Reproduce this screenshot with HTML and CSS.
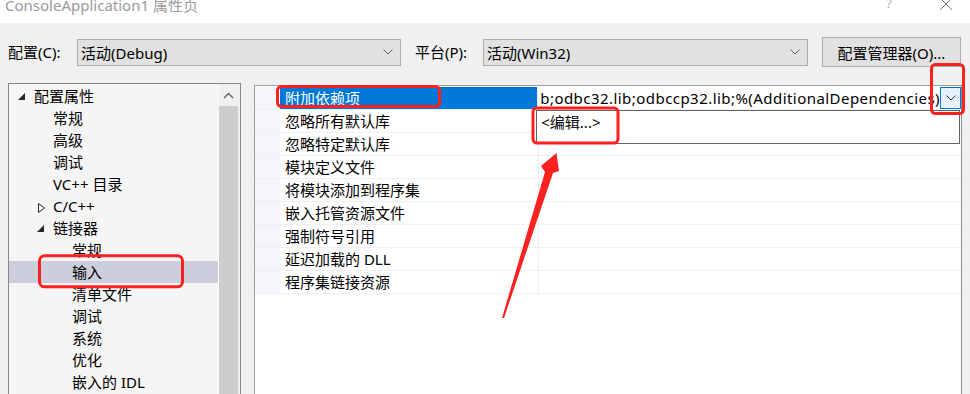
FILE: index.html
```html
<!DOCTYPE html>
<html lang="zh-CN">
<head>
<meta charset="utf-8">
<title>ConsoleApplication1 属性页</title>
<link rel="stylesheet" href="styles.css">
</head>
<body>
<div class="window">
  <div class="titlebar">
    <span class="title">ConsoleApplication1 属性页</span>
    <span class="help">?</span>
    <svg class="close" width="14" height="14" viewBox="0 0 14 14"><path d="M1 1 L13 13 M13 1 L1 13" stroke="#7a7a7a" stroke-width="1" fill="none"/></svg>
  </div>

  <div class="toolbar">
    <span class="lbl lbl-config">配置(C):</span>
    <div class="combo combo-config">
      <span class="combo-text">活动(Debug)</span>
      <svg class="chev" width="10" height="6" viewBox="0 0 10 6"><path d="M0.5 0.5 L5 5 L9.5 0.5" stroke="#606060" stroke-width="1" fill="none"/></svg>
    </div>
    <span class="lbl lbl-platform">平台(P):</span>
    <div class="combo combo-platform">
      <span class="combo-text">活动(Win32)</span>
      <svg class="chev" width="10" height="6" viewBox="0 0 10 6"><path d="M0.5 0.5 L5 5 L9.5 0.5" stroke="#606060" stroke-width="1" fill="none"/></svg>
    </div>
    <div class="btn">配置管理器(O)...</div>
  </div>

  <div class="main">
    <div class="tree">
      <ul class="tree-list">
        <li class="node lv0"><span class="twisty"><svg width="7" height="7" viewBox="0 0 7 7"><polygon points="7,0 7,7 0,7" fill="#262626"/></svg></span>配置属性</li>
        <li class="node lv1"><span class="twisty"></span>常规</li>
        <li class="node lv1"><span class="twisty"></span>高级</li>
        <li class="node lv1"><span class="twisty"></span>调试</li>
        <li class="node lv1"><span class="twisty"></span>VC++ 目录</li>
        <li class="node lv1"><span class="twisty tw-col"><svg width="7" height="10" viewBox="0 0 7 10"><polygon points="0.5,0.5 6.5,5 0.5,9.5" fill="none" stroke="#262626" stroke-width="1"/></svg></span>C/C++</li>
        <li class="node lv1"><span class="twisty"><svg width="7" height="7" viewBox="0 0 7 7"><polygon points="7,0 7,7 0,7" fill="#262626"/></svg></span>链接器</li>
        <li class="node lv2">常规</li>
        <li class="node lv2 selected">输入</li>
        <li class="node lv2">清单文件</li>
        <li class="node lv2">调试</li>
        <li class="node lv2">系统</li>
        <li class="node lv2">优化</li>
        <li class="node lv2">嵌入的 IDL</li>
      </ul>
      <div class="vscroll">
        <div class="sb-up"><svg width="11" height="7" viewBox="0 0 11 7"><path d="M1 6 L5.5 1.5 L10 6" stroke="#606060" stroke-width="1.4" fill="none"/></svg></div>
        <div class="sb-thumb"></div>
      </div>
    </div>

    <div class="grid">
      <div class="row">
        <div class="gutter"></div>
        <div class="name sel">附加依赖项</div>
        <div class="value value-edit">
          <span class="value-text">b;odbc32.lib;odbccp32.lib;%(AdditionalDependencies)</span>
          <div class="drop-btn"><svg width="10" height="6" viewBox="0 0 10 6"><path d="M0.5 0.5 L5 5 L9.5 0.5" stroke="#333" stroke-width="1" fill="none"/></svg></div>
          <div class="popup">&lt;编辑...&gt;</div>
        </div>
      </div>
      <div class="row"><div class="gutter"></div><div class="name">忽略所有默认库</div><div class="value"></div></div>
      <div class="row"><div class="gutter"></div><div class="name">忽略特定默认库</div><div class="value"></div></div>
      <div class="row"><div class="gutter"></div><div class="name">模块定义文件</div><div class="value"></div></div>
      <div class="row"><div class="gutter"></div><div class="name">将模块添加到程序集</div><div class="value"></div></div>
      <div class="row"><div class="gutter"></div><div class="name">嵌入托管资源文件</div><div class="value"></div></div>
      <div class="row"><div class="gutter"></div><div class="name">强制符号引用</div><div class="value"></div></div>
      <div class="row"><div class="gutter"></div><div class="name">延迟加载的 DLL</div><div class="value"></div></div>
      <div class="row"><div class="gutter"></div><div class="name">程序集链接资源</div><div class="value"></div></div>
    </div>
  </div>

  <svg class="annot" width="970" height="394" viewBox="0 0 970 394">
    <g fill="none" stroke="#ff2020" stroke-width="3">
      <rect x="277.5" y="86.5" width="162" height="20" rx="4"/>
      <rect x="931.5" y="64.5" width="32" height="49" rx="4"/>
      <rect x="533" y="108" width="85" height="35" rx="4"/>
      <rect x="39.5" y="255.8" width="143" height="31" rx="5"/>
    </g>
    <polygon fill="#ff2020" points="502,318 545,172 541,166 556.5,153 559,171 553,173 504,318"/>
  </svg>
</div>
</body>
</html>
```

FILE: styles.css
```css
* {
  box-sizing: border-box;
  margin: 0;
  padding: 0;
}

html, body {
  width: 970px;
  height: 394px;
  overflow: hidden;
}

body {
  background: #f0f0f0;
  font-family: "Noto Sans", "Noto Sans CJK SC", sans-serif;
  font-size: 15px;
  color: #000;
}

.window {
  position: relative;
  width: 970px;
  height: 394px;
  overflow: hidden;
}

/* title bar */
.titlebar {
  height: 23px;
  background: #fff;
  display: flex;
  align-items: flex-start;
  overflow: hidden;
}

.title {
  margin-left: 5px;
  margin-top: -4px;
  line-height: 18px;
  font-size: 15px;
  color: #9a9a9a;
  white-space: nowrap;
}

.help {
  margin-left: auto;
  margin-top: -5px;
  line-height: 16px;
  font-size: 13px;
  color: #b0b0b0;
}

.close {
  margin-left: 47px;
  margin-right: 17px;
  margin-top: -3px;
}

/* toolbar */
.toolbar {
  display: flex;
  align-items: center;
  height: 30px;
  margin-top: 14px;
}

.lbl {
  white-space: nowrap;
  line-height: 20px;
}

.lbl-config {
  margin-left: 8px;
  width: 69px;
}

.lbl-platform {
  margin-left: 14px;
  width: 68px;
}

.combo {
  height: 27px;
  background: #e1e1e1;
  border: 1px solid #adadad;
  display: flex;
  align-items: center;
  padding-left: 3px;
  padding-right: 7px;
}

.combo-config {
  width: 324px;
}

.combo-platform {
  width: 325px;
}

.combo-text {
  flex: 1;
  white-space: nowrap;
}

.btn {
  margin-left: 14px;
  width: 139px;
  height: 30px;
  background: #e1e1e1;
  border: 1px solid #adadad;
  display: flex;
  align-items: center;
  justify-content: center;
  white-space: nowrap;
}

/* main area */
.main {
  display: flex;
  align-items: flex-start;
  margin-top: 16px;
}

.tree {
  margin-left: 8px;
  width: 233px;
  height: 330px;
  border: 1px solid #828790;
  background: #f5f5f5;
  display: flex;
}

.tree-list {
  list-style: none;
  flex: 1;
  padding-top: 1px;
}

.node {
  height: 22px;
  display: flex;
  align-items: center;
  white-space: nowrap;
  line-height: 22px;
}

.lv0 { padding-left: 6px; }
.lv1 { padding-left: 25px; }
.lv2 { padding-left: 63px; }

.node.selected {
  background: #cccedb;
}

.twisty {
  width: 19px;
  height: 22px;
  display: flex;
  align-items: center;
  padding-left: 3px;
  flex: none;
}

.twisty.tw-col {
  padding-left: 4px;
  padding-top: 3px;
}

.vscroll {
  width: 22px;
  background: #f0f0f0;
  border-left: 1px solid #fafafa;
  padding-right: 2px;
  display: flex;
  flex-direction: column;
}

.sb-up {
  height: 22px;
  display: flex;
  align-items: center;
  justify-content: center;
  padding-right: 1px;
}

.sb-thumb {
  flex: 1;
  background: #cdcdcd;
}

/* property grid */
.grid {
  margin-left: 13px;
  margin-top: 2px;
  width: 708px;
  height: 320px;
  background: #fff;
  border-left: 1px solid #a0a0a0;
  border-top: 1px solid #a0a0a0;
  border-right: 1px solid #828790;
  padding-top: 1px;
}

.row {
  display: flex;
  height: 23px;
}

.gutter {
  width: 25px;
  background: #f4f6fa;
  border-bottom: 1px solid #eef0f4;
}

.name {
  width: 259px;
  padding-left: 5px;
  line-height: 22px;
  border-bottom: 1px solid #f0f0f0;
  border-right: 1px solid #eceef4;
  white-space: nowrap;
}

.name.sel {
  background: #0078d7;
  color: #fff;
}

.value {
  flex: 1;
  border-bottom: 1px solid #f0f0f0;
  line-height: 22px;
}

.value-edit {
  position: relative;
  display: flex;
  padding-left: 2px;
}

.value-text {
  flex: 1;
  overflow: hidden;
  white-space: nowrap;
  letter-spacing: 0.45px;
}

.drop-btn {
  width: 21px;
  height: 22px;
  background: #e5f1fb;
  border: 1px solid #0078d7;
  display: flex;
  align-items: center;
  justify-content: center;
  flex: none;
}

.popup {
  position: absolute;
  left: -2px;
  top: 23px;
  width: 424px;
  height: 34px;
  background: #fff;
  border: 1px solid #646464;
  padding-left: 4px;
  line-height: 22px;
  z-index: 5;
}

/* annotations */
.annot {
  position: absolute;
  left: 0;
  top: 0;
  pointer-events: none;
  z-index: 10;
}
```
